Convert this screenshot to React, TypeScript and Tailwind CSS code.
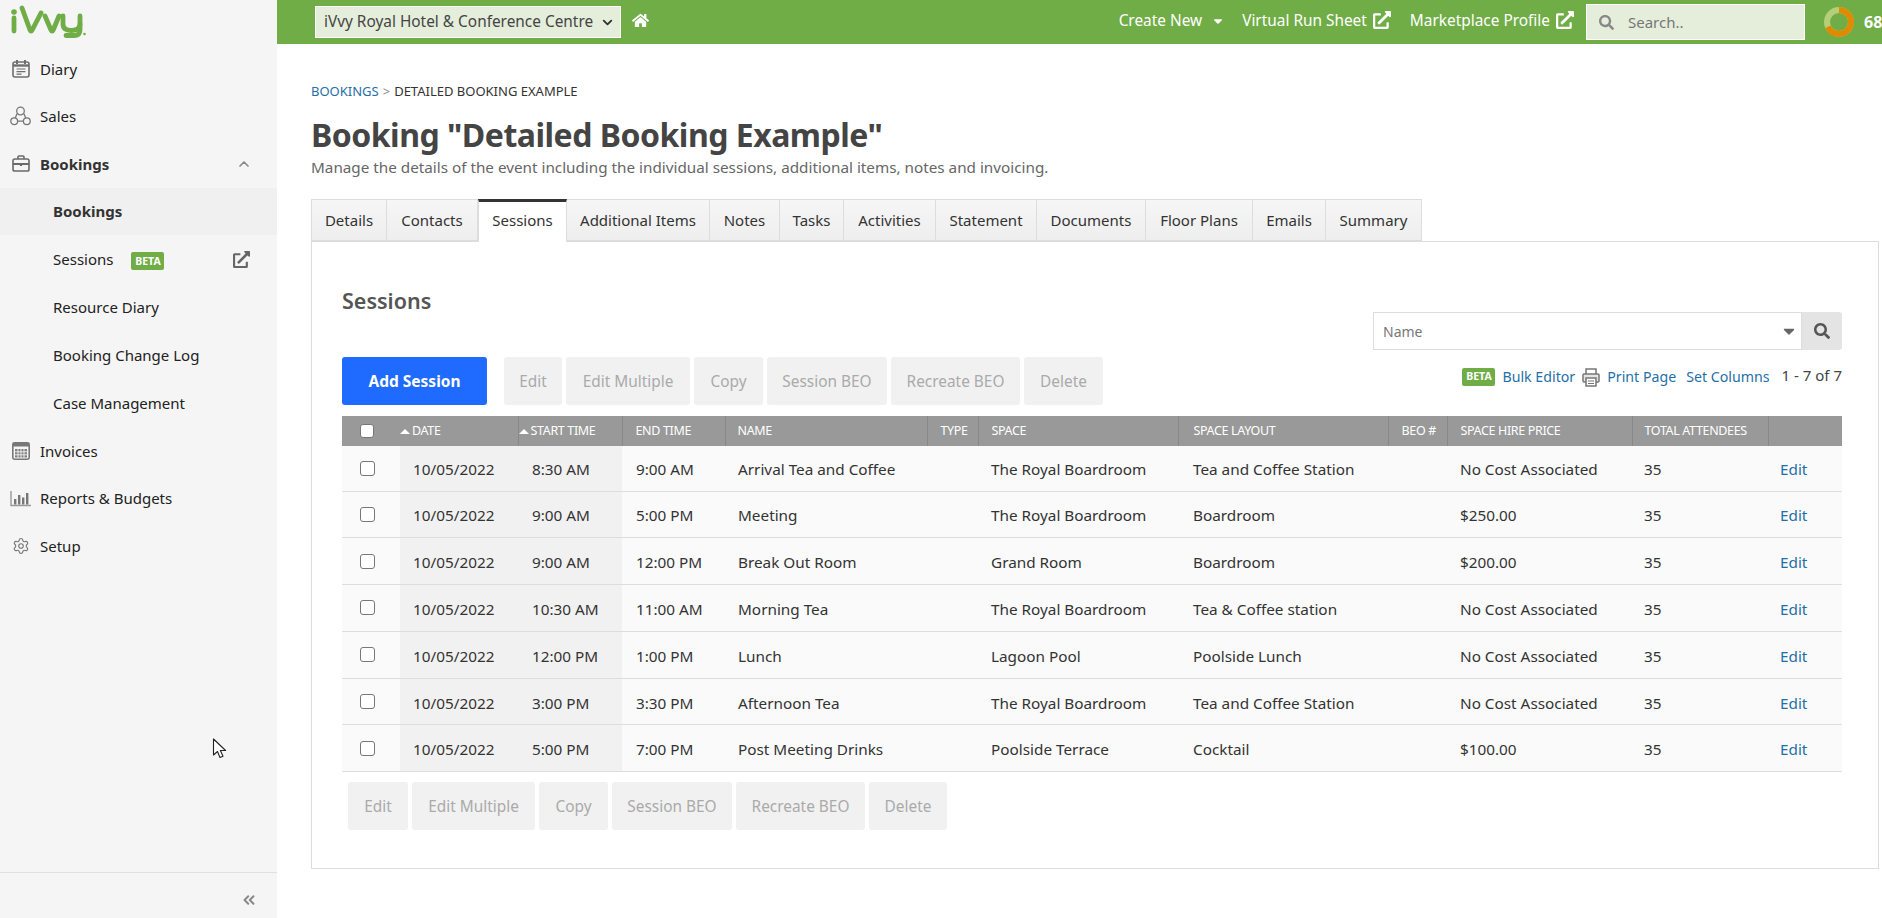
import { ChevronDown, ChevronUp, ChevronsLeft, Settings } from "lucide-react";
import { FaCaretDown, FaExternalLinkAlt, FaHome, FaSearch } from "react-icons/fa";

const tabs = [
  { label: "Details", width: "w-[76px]" },
  { label: "Contacts", width: "w-[91px]" },
  { label: "Sessions", width: "w-[89px]", active: true },
  { label: "Additional Items", width: "w-[143px]" },
  { label: "Notes", width: "w-[70px]" },
  { label: "Tasks", width: "w-[64px]" },
  { label: "Activities", width: "w-[92px]" },
  { label: "Statement", width: "w-[101px]" },
  { label: "Documents", width: "w-[109px]" },
  { label: "Floor Plans", width: "w-[107px]" },
  { label: "Emails", width: "w-[73px]" },
  { label: "Summary", width: "w-[96px]" },
];

const rows = [
  ["8:30 AM", "9:00 AM", "Arrival Tea and Coffee", "The Royal Boardroom", "Tea and Coffee Station", "No Cost Associated"],
  ["9:00 AM", "5:00 PM", "Meeting", "The Royal Boardroom", "Boardroom", "$250.00"],
  ["9:00 AM", "12:00 PM", "Break Out Room", "Grand Room", "Boardroom", "$200.00"],
  ["10:30 AM", "11:00 AM", "Morning Tea", "The Royal Boardroom", "Tea & Coffee station", "No Cost Associated"],
  ["12:00 PM", "1:00 PM", "Lunch", "Lagoon Pool", "Poolside Lunch", "No Cost Associated"],
  ["3:00 PM", "3:30 PM", "Afternoon Tea", "The Royal Boardroom", "Tea and Coffee Station", "No Cost Associated"],
  ["5:00 PM", "7:00 PM", "Post Meeting Drinks", "Poolside Terrace", "Cocktail", "$100.00"],
];

function DiaryIcon() {
  return (
    <svg width="18" height="19" viewBox="0 0 18 19" fill="none" stroke="#6f6f6f" strokeWidth="1.6">
      <rect x="1" y="3" width="16" height="15" rx="2" />
      <path d="M1 6.500h16" strokeWidth="2.400" />
      <path d="M5 1v4M13 1v4" strokeWidth="2" />
      <path d="M4.500 10h9M4.500 12.600h9M4.500 15.200h5" strokeWidth="1.200" />
    </svg>
  );
}

function SalesIcon() {
  return (
    <svg width="21" height="20" viewBox="0 0 21 20" fill="none" stroke="#777" strokeWidth="1.300">
      <circle cx="10.500" cy="5" r="3.800" />
      <circle cx="4.200" cy="15.200" r="3.400" />
      <circle cx="16.800" cy="15.200" r="3.400" />
      <path d="M7.200 7.500L5.200 11.900M13.800 7.500l2 4.400M7.600 15.200h5.800" />
    </svg>
  );
}

function BriefcaseIcon() {
  return (
    <svg width="18" height="17" viewBox="0 0 18 17" fill="none" stroke="#6a6a6a" strokeWidth="1.600">
      <rect x="1" y="4" width="16" height="12" rx="1.800" />
      <path d="M6 4V2a1 1 0 0 1 1-1h4a1 1 0 0 1 1 1v2" />
      <path d="M1 9h16" strokeWidth="2" />
      <path d="M9 8v3" strokeWidth="2.200" />
    </svg>
  );
}

function CalculatorIcon() {
  return (
    <svg width="18" height="18" viewBox="0 0 18 18">
      <rect x="0.800" y="0.800" width="16.400" height="16.400" rx="1.600" fill="none" stroke="#777" strokeWidth="1.600" />
      <rect x="1" y="1" width="16" height="3.500" fill="#777" />
      <path d="M3 7h12v8.500H3z" fill="#808080" />
      <path d="M6 6.500v9.500M9 6.500v9.500M12 6.500v9.500M3 9.800h12M3 12.800h12" stroke="#f5f5f5" strokeWidth="0.900" />
    </svg>
  );
}

function ChartIcon() {
  return (
    <svg width="21" height="17" viewBox="0 0 21 17" fill="#777">
      <path d="M1 1v14.500h20" fill="none" stroke="#999" strokeWidth="1.400" />
      <rect x="4" y="9" width="2.400" height="5.500" />
      <rect x="8" y="5" width="2.400" height="9.500" />
      <rect x="12" y="7.500" width="2.400" height="7" />
      <rect x="16" y="3" width="2.400" height="11.500" />
    </svg>
  );
}

function PrinterIcon() {
  return (
    <svg width="18" height="20" viewBox="0 0 18 20" fill="none" stroke="#777" strokeWidth="1.500">
      <path d="M4 7V2h10v5" />
      <path d="M4 15H2a1 1 0 0 1-1-1V8a1 1 0 0 1 1-1h14a1 1 0 0 1 1 1v6a1 1 0 0 1-1 1h-2" fill="#e4e4e4" />
      <rect x="4" y="11" width="10" height="8" fill="#fff" />
      <path d="M6 14h6M6 16.500h6" strokeWidth="1.100" />
    </svg>
  );
}

function Logo() {
  return (
    <svg width="78" height="33" viewBox="0 0 78 33" fill="none" stroke="#70ad47" strokeWidth="4.800" strokeLinecap="round" strokeLinejoin="round">
      <circle cx="4" cy="7" r="2.800" fill="#70ad47" stroke="none" />
      <path d="M4 13v13" />
      <path d="M12 3l8 22c.6 1.600 1.400 1.600 2.200 0L31 8" />
      <path d="M35 11l6 14c.6 1.600 1.500 1.600 2.200 0L49 11" />
      <path d="M53 11v8c0 4.500 2.500 6.500 8 6.500s9-2 9-6.500v-8" />
      <path d="M70 19v6c0 4-2.500 5.500-6 5.500h-8" />
      <circle cx="74.500" cy="29" r="1.300" fill="#70ad47" stroke="none" />
    </svg>
  );
}

function NavItem({ icon, label }: { icon: React.ReactNode; label: string }) {
  return (
    <div className="flex h-[47.5px] items-center">
      <span className="flex w-[40px] shrink-0 justify-center pl-[1px]">{icon}</span>
      <span>{label}</span>
    </div>
  );
}

function Beta() {
  return (
    <span className="inline-flex h-[18px] w-[33px] items-center justify-center rounded-[2px] bg-[#70ad47] text-[10.5px] font-bold text-white">
      BETA
    </span>
  );
}

function Sidebar() {
  return (
    <aside className="flex h-[918px] w-[277px] shrink-0 flex-col bg-[#f5f5f5] text-[15px] text-[#222]">
      <div className="h-[45px] pl-[10px] pt-[5px]">
        <Logo />
      </div>
      <NavItem icon={<DiaryIcon />} label="Diary" />
      <NavItem icon={<SalesIcon />} label="Sales" />
      <div className="flex h-[47.5px] items-center pr-[25px]">
        <span className="flex w-[40px] shrink-0 justify-center pl-[1px]">
          <BriefcaseIcon />
        </span>
        <span className="flex-1 font-bold text-[#333]">Bookings</span>
        <ChevronUp size={16} strokeWidth={2.5} className="text-[#888]" />
      </div>
      <div className="flex h-[47px] items-center bg-[#f0f0f0] pl-[53px] font-bold text-[#333]">Bookings</div>
      <div className="flex h-[49px] items-center pl-[53px] pr-[27px]">
        <span>Sessions</span>
        <span className="ml-[18px] flex-1">
          <Beta />
        </span>
        <FaExternalLinkAlt size={17} className="text-[#666]" />
      </div>
      <div className="flex h-[48px] items-center pl-[53px]">Resource Diary</div>
      <div className="flex h-[48px] items-center pl-[53px]">Booking Change Log</div>
      <div className="flex h-[47.5px] items-center pl-[53px]">Case Management</div>
      <NavItem icon={<CalculatorIcon />} label="Invoices" />
      <NavItem icon={<ChartIcon />} label="Reports & Budgets" />
      <NavItem icon={<Settings size={18} strokeWidth={1.5} className="text-[#777]" />} label="Setup" />
      <div className="mt-auto flex h-[46px] items-center justify-end border-t border-[#e0e0e0] pr-[19px] pt-[8px]">
        <ChevronsLeft size={18} strokeWidth={2.6} className="text-[#888]" />
      </div>
    </aside>
  );
}

function TopBar() {
  return (
    <header className="flex h-[44px] items-center bg-[#70ad47] text-[15.4px] text-white">
      <div className="ml-[38px] flex h-[32px] w-[306px] shrink-0 items-center justify-between border border-white bg-[#e4eedb] pl-[8px] pr-[5px] text-[#444]">
        <span className="whitespace-nowrap">iVvy Royal Hotel &amp; Conference Centre</span>
        <ChevronDown size={15} strokeWidth={3} className="text-[#333]" />
      </div>
      <FaHome size={17} className="mb-[4px] ml-[11px]" />
      <div className="ml-auto flex h-full shrink-0 items-center">
        <span className="mb-[3px] whitespace-nowrap">Create New</span>
        <FaCaretDown size={14} className="mb-[3px] ml-[9px]" />
        <span className="mb-[3px] ml-[17px] whitespace-nowrap">Virtual Run Sheet</span>
        <FaExternalLinkAlt size={18} className="mb-[5px] ml-[6px]" />
        <span className="mb-[3px] ml-[19px] whitespace-nowrap">Marketplace Profile</span>
        <FaExternalLinkAlt size={18} className="mb-[5px] ml-[6px]" />
        <div className="ml-[12px] flex h-[36px] w-[219px] items-center border border-white bg-[#e4eedb] pl-[12px] text-[15px] text-[#777]">
          <FaSearch size={15} className="text-[#888]" />
          <span className="ml-[14px]">Search..</span>
        </div>
        <svg width="30" height="30" viewBox="0 0 30 30" className="ml-[19px]">
          <circle cx="15" cy="15" r="12" fill="none" stroke="#b5cf78" strokeWidth="6" />
          <circle cx="15" cy="15" r="12" fill="none" stroke="#e08a00" strokeWidth="6" strokeDasharray="51.3 24.1" transform="rotate(-90 15 15)" />
        </svg>
        <span className="ml-[10px] w-[18px] text-[16px] font-bold">68</span>
      </div>
    </header>
  );
}

function Disabled({ label, width }: { label: string; width: string }) {
  return (
    <button className={`flex h-[48px] items-center justify-center rounded-[3px] bg-[#f1f1f1] text-[15.4px] text-[#aaa] ${width}`}>{label}</button>
  );
}

function SessionsTable() {
  const th = "h-[30px] border-l border-[#888] pl-[13px] text-left font-normal";
  const td = "pt-[3px]";
  return (
    <table className="w-[1500px] table-fixed border-collapse">
      <colgroup>
        <col className="w-[58px]" />
        <col className="w-[118px]" />
        <col className="w-[104px]" />
        <col className="w-[103px]" />
        <col className="w-[202px]" />
        <col className="w-[51px]" />
        <col className="w-[200px]" />
        <col className="w-[210px]" />
        <col className="w-[59px]" />
        <col className="w-[185px]" />
        <col className="w-[136px]" />
        <col className="w-[74px]" />
      </colgroup>
      <thead>
        <tr className="bg-[#999] text-[12.5px] tracking-[-0.35px] text-white">
          <th className="h-[30px] pl-[18px] text-left font-normal">
            <input type="checkbox" className="block h-[14px] w-[14px] appearance-none rounded-[3px] border border-[#777] bg-white" />
          </th>
          <th className="h-[30px] text-left font-normal">
            <span className="inline-block h-0 w-0 border-x-[5px] border-b-[5px] border-x-transparent border-b-white align-middle" />
            <span className="ml-[2px]">DATE</span>
          </th>
          <th className="h-[30px] border-l border-[#888] text-left font-normal">
            <span className="inline-block h-0 w-0 border-x-[5px] border-b-[5px] border-x-transparent border-b-white align-middle" />
            <span className="ml-[2px]">START TIME</span>
          </th>
          <th className={th}>END TIME</th>
          <th className="h-[30px] border-l border-[#888] pl-[12px] text-left font-normal">NAME</th>
          <th className={th}>TYPE</th>
          <th className={th}>SPACE</th>
          <th className="h-[30px] border-l border-[#888] pl-[15px] text-left font-normal">SPACE LAYOUT</th>
          <th className={th}>BEO #</th>
          <th className={th}>SPACE HIRE PRICE</th>
          <th className="h-[30px] border-l border-[#888] pl-[12px] text-left font-normal">TOTAL ATTENDEES</th>
          <th className="h-[30px] border-l border-[#888]" />
        </tr>
      </thead>
      <tbody className="text-[15.3px] text-[#333]">
        {rows.map((row, i) => (
          <tr key={i} className={`border-b border-[#ddd] bg-[#fafafa] ${i === 0 ? "h-[45px]" : "h-[46.8px]"}`}>
            <td className="pl-[18px]">
              <input type="checkbox" className="block h-[15px] w-[15px] appearance-none rounded-[3px] border border-[#777] bg-white" />
            </td>
            <td className={`bg-[#f1f1f1] pl-[13px] ${td}`}>10/05/2022</td>
            <td className={`bg-[#f1f1f1] pl-[14px] ${td}`}>{row[0]}</td>
            <td className={`pl-[14px] ${td}`}>{row[1]}</td>
            <td className={`pl-[13px] ${td}`}>{row[2]}</td>
            <td />
            <td className={`pl-[13px] ${td}`}>{row[3]}</td>
            <td className={`pl-[15px] ${td}`}>{row[4]}</td>
            <td />
            <td className={`pl-[13px] ${td}`}>{row[5]}</td>
            <td className={`pl-[12px] ${td}`}>35</td>
            <td className={`pl-[12px] text-[#1f6fa8] ${td}`}>Edit</td>
          </tr>
        ))}
      </tbody>
    </table>
  );
}

function SessionsPanel() {
  return (
    <section className="h-[628px] w-[1568px] border border-[#ddd] pl-[30px] pr-[36px]">
      <div className="flex h-[115px] justify-between">
        <h2 className="mt-[43px] text-[21.5px] font-semibold text-[#555]">Sessions</h2>
        <div className="mt-[70px] flex h-[38px] w-[469px]">
          <div className="flex flex-1 items-center justify-between border border-[#ddd] pl-[9px] pr-[3px] text-[14px] text-[#777]">
            <span>Name</span>
            <FaCaretDown size={18} className="text-[#666]" />
          </div>
          <div className="flex w-[40px] items-center justify-center rounded-r-[3px] bg-[#e4e4e4]">
            <FaSearch size={16} className="text-[#555]" />
          </div>
        </div>
      </div>
      <div className="flex h-[66px] items-start">
        <button className="flex h-[48px] w-[145px] items-center justify-center rounded-[3px] bg-[#1f6bff] pt-[2px] text-[15.5px] font-bold text-white">
          Add Session
        </button>
        <div className="ml-[17px] flex gap-[4px]">
          <Disabled label="Edit" width="w-[58px] pt-[2px]" />
          <Disabled label="Edit Multiple" width="w-[124px] pt-[2px]" />
          <Disabled label="Copy" width="w-[69px] pt-[2px]" />
          <Disabled label="Session BEO" width="w-[120px] pt-[2px]" />
          <Disabled label="Recreate BEO" width="w-[129px] pt-[2px]" />
          <Disabled label="Delete" width="w-[79px] pt-[2px]" />
        </div>
        <div className="ml-auto mt-[7px] flex items-center text-[14.2px] text-[#1f6fa8]">
          <Beta />
          <span className="ml-[7px]">Bulk Editor</span>
          <span className="ml-[7px]">
            <PrinterIcon />
          </span>
          <span className="ml-[7px]">Print Page</span>
          <span className="ml-[10px]">Set Columns</span>
          <span className="mb-[3px] ml-[12px] text-[15px] text-[#444]">1 - 7 of 7</span>
        </div>
      </div>
      <div className="-mt-[7px]">
        <SessionsTable />
      </div>
      <div className="ml-[6px] mt-[10px] flex gap-[4px]">
        <Disabled label="Edit" width="w-[60px]" />
        <Disabled label="Edit Multiple" width="w-[123px]" />
        <Disabled label="Copy" width="w-[69px]" />
        <Disabled label="Session BEO" width="w-[120px]" />
        <Disabled label="Recreate BEO" width="w-[129px]" />
        <Disabled label="Delete" width="w-[78px]" />
      </div>
    </section>
  );
}

export default function App() {
  return (
    <div className="relative flex h-[918px] w-[1882px] overflow-hidden bg-white text-[15px] text-[#333] [font-family:'Noto_Sans',sans-serif]">
      <Sidebar />
      <div className="min-w-0 flex-1">
        <TopBar />
        <main className="pl-[34px]">
          <div className="mt-[38px] flex h-[20px] items-center text-[13px]">
            <span className="text-[#1f6fa8]">BOOKINGS</span>
            <span className="mx-[4px] text-[#888]">&gt;</span>
            <span>DETAILED BOOKING EXAMPLE</span>
          </div>
          <h1 className="mt-[12px] h-[41px] text-[32px] leading-[42px] font-bold tracking-[-0.5px] text-[#444]">
            Booking "Detailed Booking Example"
          </h1>
          <p className="h-[24px] text-[15.25px] leading-[24px] text-[#666]">
            Manage the details of the event including the individual sessions, additional items, notes and invoicing.
          </p>
          <nav className="relative z-10 mt-[20px] flex h-[43px] items-start">
            {tabs.map((tab) =>
              tab.active ? (
                <div key={tab.label} className={`flex h-[43px] items-center justify-center border-x border-t-[3px] border-x-[#ddd] border-t-[#333] bg-white pb-[3px] ${tab.width}`}>
                  {tab.label}
                </div>
              ) : (
                <div key={tab.label} className={`flex h-[42px] items-center justify-center border border-l-0 border-[#ddd] bg-gradient-to-b from-[#f6f6f6] to-[#eeeeee] pt-[1px] first:border-l ${tab.width}`}>
                  {tab.label}
                </div>
              ),
            )}
          </nav>
          <div className="-mt-[1px]">
            <SessionsPanel />
          </div>
        </main>
      </div>
      <svg width="16" height="22" viewBox="0 0 16 22" className="absolute left-[212px] top-[738px]">
        <path d="M1.500 1v16l4-3.500 2.500 6 3-1.200-2.600-5.800h5.200z" fill="#fff" stroke="#222" strokeWidth="1.100" strokeLinejoin="round" />
      </svg>
    </div>
  );
}
